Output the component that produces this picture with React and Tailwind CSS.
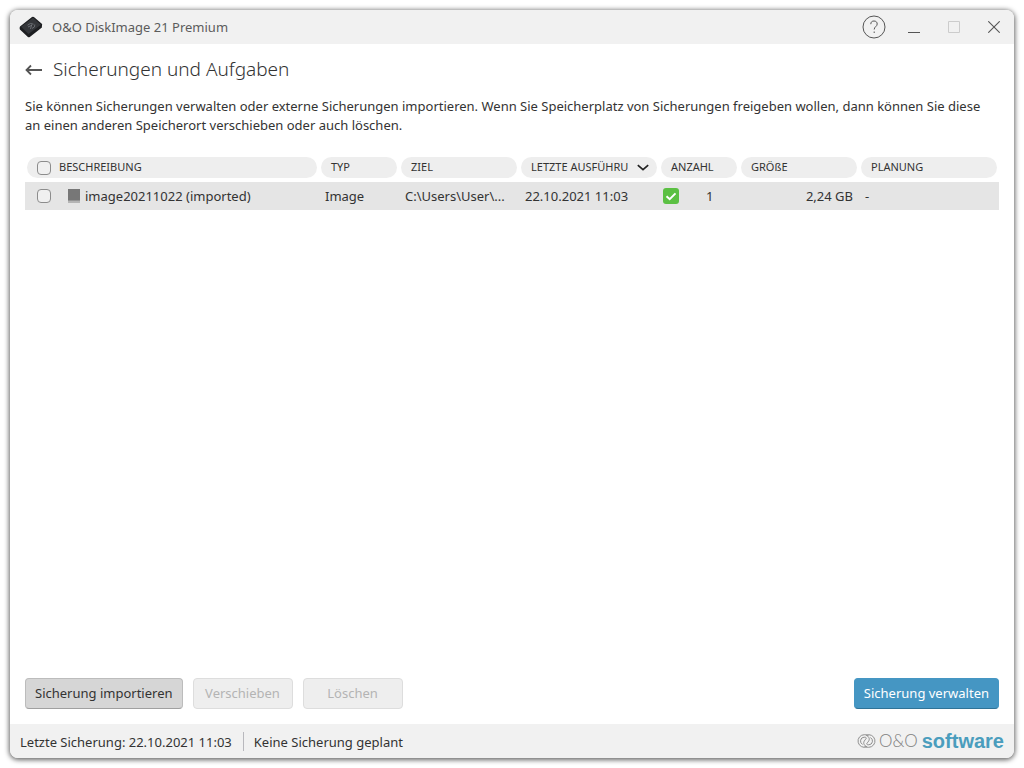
import React, { useState } from "react";

const columns = [
  { key: "typ", label: "TYP", width: "w-20" },
  { key: "ziel", label: "ZIEL", width: "w-[120px]" },
  { key: "letzte", label: "LETZTE AUSFÜHRU", width: "w-[140px]", sorted: true },
  { key: "anzahl", label: "ANZAHL", width: "w-20" },
  { key: "groesse", label: "GRÖßE", width: "w-[120px]" },
  { key: "planung", label: "PLANUNG", width: "w-[140px]" },
];

const backups = [
  {
    id: 1,
    name: "image20211022 (imported)",
    type: "Image",
    target: "C:\\Users\\User\\...",
    lastRun: "22.10.2021 11:03",
    count: 1,
    size: "2,24 GB",
    plan: "-",
  },
];

const DiskLogo = () => (
  <svg width="24" height="22" viewBox="0 0 24 22" aria-hidden="true">
    <path d="M1 10.500 13 1q1.200-.8 2.200.2l7.600 6.600q.8.900.1 2.200v1.500L10.800 21q-1 .7-1.900-.1L.9 13.500q-.7-1.500.1-3z" fill="#1d1e21" />
    <path d="M2 10.800 14.100 1.800l7.800 6.900L9.500 18z" fill="#34363a" />
    <path d="M8.500 9.200q3-3 6-1M9 11l4-1.800M11.500 13l1.300-4.500M13 12.500q3.500-1.200 2.800-4" fill="none" stroke="#777a80" strokeWidth="0.8" />
  </svg>
);

const Checkbox = ({ label, checked, onChange }) => (
  <input
    type="checkbox"
    aria-label={label}
    checked={checked}
    onChange={onChange}
    className="block size-[14px] shrink-0 appearance-none rounded-[4px] border border-[#8c8c8c] bg-[#f0f0f0] checked:bg-[#4596c3]"
  />
);

// one ring with its inner swirl, the second is the same ring turned round
const ring = "M11.500 1.600C10.300.9 9 .7 7.300.7A6.300 6.300 0 1 0 9.800 12.800C7.200 11.500 6 9.300 7.200 7.200 8 5.600 9.600 4.600 9.200 3.800 8.800 3.200 8 3.200 7.200 3.200A3.800 3.800 0 0 0 5.600 10.400";

const CompanyLogo = () => (
  <div className="flex items-center">
    <svg width="19" height="14" viewBox="0 0 19 14" fill="none" stroke="#8f8f8f" strokeWidth="1" aria-hidden="true">
      <path d={ring} />
      <path d={ring} transform="rotate(180 9.500 7)" />
    </svg>
    <span className="ml-[3px] font-['Lato',sans-serif] text-[17px] leading-5 font-light text-[#808080]">O&amp;O</span>
    <span className="ml-1 font-['Liberation_Sans',sans-serif] text-xl leading-5 font-bold text-[#4a9dbd]">software</span>
  </div>
);

const App = () => {
  const [selected, setSelected] = useState([]);
  const allSelected = selected.length === backups.length;

  const toggle = (id) =>
    setSelected(
      selected.includes(id) ? selected.filter((s) => s !== id) : [...selected, id]
    );

  return (
    <div className="flex min-h-screen bg-white p-[10px] font-['Noto_Sans',sans-serif] text-[13px] text-[#333333]">
      <div className="flex min-w-0 flex-1 flex-col overflow-hidden rounded-lg bg-white shadow-[0_1px_5px_1px_rgba(0,0,0,0.6)]">
        {/* Title bar */}
        <header className="flex h-[34px] items-center justify-between bg-[#f1f1f1] pl-[9px]">
          <div className="flex items-center gap-[9px] text-[#5c5c5c]">
            <DiskLogo />
            <span className="pt-[2px]">O&amp;O DiskImage 21 Premium</span>
          </div>
          <div className="flex text-[#555555]">
            <button aria-label="Hilfe" className="flex h-[34px] w-10 items-center justify-center">
              <svg width="24" height="24" viewBox="0 0 24 24" fill="none" stroke="currentColor">
                <circle cx="12" cy="12" r="11" />
                <path d="M8.800 9.200C8.800 7 10 6 12 6s3.200 1.200 3.200 3c0 2.500-3 2.700-3 5.500M12.200 16.500v1.500" />
              </svg>
            </button>
            <button aria-label="Minimieren" className="flex h-[34px] w-10 items-center justify-center">
              <svg width="12" height="12" viewBox="0 0 12 12" stroke="currentColor">
                <path d="M0 11.500h12" />
              </svg>
            </button>
            <button aria-label="Maximieren" disabled className="flex h-[34px] w-10 items-center justify-center text-[#cccccc]">
              <svg width="12" height="12" viewBox="0 0 12 12" fill="none" stroke="currentColor">
                <path d="M.5.5h11v11H.5z" />
              </svg>
            </button>
            <button aria-label="Schließen" className="flex h-[34px] w-10 items-center justify-center">
              <svg width="12" height="12" viewBox="0 0 12 12" stroke="currentColor" strokeWidth="1.1">
                <path d="M.3.3l11.400 11.400M11.700.3.3 11.700" />
              </svg>
            </button>
          </div>
        </header>

        <main className="flex flex-1 flex-col px-[15px] pt-[10px] pb-[15px]">
          <div className="flex h-[30px] items-center gap-[11px]">
            <button aria-label="Zurück">
              <svg width="17" height="14" viewBox="0 0 17 14" fill="none" stroke="#555555" strokeWidth="1.8">
                <path d="M17 8H2M6 3.500 1.500 8 6 12.500" />
              </svg>
            </button>
            <h1 className="text-[19px] font-light">Sicherungen und Aufgaben</h1>
          </div>
          <p className="mt-[13px] pr-2 leading-[19px]">
            Sie können Sicherungen verwalten oder externe Sicherungen importieren. Wenn Sie
            Speicherplatz von Sicherungen freigeben wollen, dann können Sie diese an einen
            anderen Speicherort verschieben oder auch löschen.
          </p>

          {/* Backup list */}
          <table className="mt-[22px] w-full table-fixed border-collapse">
            <thead>
              <tr className="text-left text-[11px]">
                <th className="px-[2px] pt-0 pb-1 font-normal">
                  <div className="flex h-[21px] items-center gap-2 rounded-full bg-[#eeeeee] pl-[10px]">
                    <Checkbox
                      label="Alle auswählen"
                      checked={allSelected}
                      onChange={() => setSelected(allSelected ? [] : backups.map((b) => b.id))}
                    />
                    BESCHREIBUNG
                  </div>
                </th>
                {columns.map((col) => (
                  <th key={col.key} className={`px-[2px] pt-0 pb-1 font-normal ${col.width}`}>
                    <div className="flex h-[21px] items-center justify-between rounded-full bg-[#eeeeee] pr-2 pl-[10px]">
                      <span className="whitespace-nowrap">{col.label}</span>
                      {col.sorted && (
                        <svg width="12" height="7" viewBox="0 0 12 7" fill="none" stroke="#222222" strokeWidth="1.7" className="shrink-0">
                          <path d="M.8 1.200 6 5.600 11.200 1.200" />
                        </svg>
                      )}
                    </div>
                  </th>
                ))}
              </tr>
            </thead>
            <tbody>
              {backups.map((b) => (
                <tr key={b.id} className="h-7 bg-[#e5e5e5]">
                  <td className="p-0 pl-3">
                    <div className="flex items-center">
                      <Checkbox
                        label={b.name}
                        checked={selected.includes(b.id)}
                        onChange={() => toggle(b.id)}
                      />
                      <svg width="12" height="14" viewBox="0 0 12 14" className="mr-[5px] ml-[17px]" aria-hidden="true">
                        <path d="M0 0h12v14H0z" fill="#b5b5b5" />
                        <path d="M0 0h12v11.500H0z" fill="#777777" />
                      </svg>
                      <span className="pt-[2px]">{b.name}</span>
                    </div>
                  </td>
                  <td className="px-[6px] pt-[2px] pb-0">{b.type}</td>
                  <td className="px-[6px] pt-[2px] pb-0 whitespace-nowrap">{b.target}</td>
                  <td className="px-[6px] pt-[2px] pb-0 whitespace-nowrap">{b.lastRun}</td>
                  <td className="px-1 py-0">
                    <div className="flex items-center gap-[27px]">
                      <svg width="16" height="16" viewBox="0 0 16 16" fill="none" role="img" aria-label="OK">
                        <rect width="16" height="16" rx="3" fill="#5bc043" />
                        <path d="M3.500 8.200 6.700 11.200 12.500 5.400" stroke="white" strokeWidth="2" />
                      </svg>
                      <span className="pt-[2px]">{b.count}</span>
                    </div>
                  </td>
                  <td className="px-[6px] pt-[2px] pb-0 text-right">{b.size}</td>
                  <td className="px-[6px] pt-[2px] pb-0">{b.plan}</td>
                </tr>
              ))}
            </tbody>
          </table>

          {/* Actions */}
          <div className="mt-auto flex gap-[10px]">
            <button className="h-[31px] rounded-[4px] border border-[#bcbcbc] border-b-[#a0a0a0] bg-[#d6d6d6] px-[9px]">
              Sicherung importieren
            </button>
            <button disabled className="h-[31px] w-[100px] rounded-[4px] border border-[#dddddd] bg-[#eeeeee] text-[#b4b4b4]">
              Verschieben
            </button>
            <button disabled className="h-[31px] w-[100px] rounded-[4px] border border-[#dddddd] bg-[#eeeeee] text-[#b4b4b4]">
              Löschen
            </button>
            <button className="ml-auto h-[31px] rounded-[4px] border border-[#4596c3] border-b-[#2f7397] bg-[#4596c3] px-[9px] text-white">
              Sicherung verwalten
            </button>
          </div>
        </main>

        {/* Status bar */}
        <footer className="flex h-[34px] items-center justify-between bg-[#f1f1f1] px-[10px]">
          <div className="flex items-center leading-[18px]">
            <span className="border-r border-[#b8b8bd] pt-px pr-[11px]">
              Letzte Sicherung: 22.10.2021 11:03
            </span>
            <span className="pt-px pl-[10px]">Keine Sicherung geplant</span>
          </div>
          <CompanyLogo />
        </footer>
      </div>
    </div>
  );
};

export default App;
